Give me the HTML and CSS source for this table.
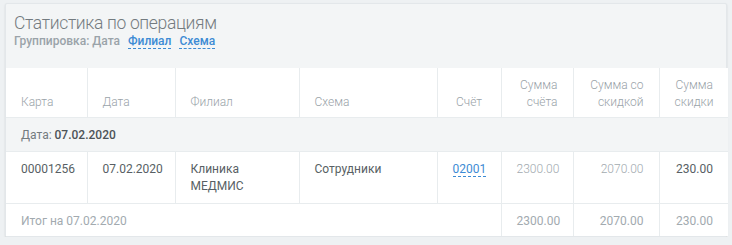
FILE: index.html
```html
<!DOCTYPE html>
<html lang="ru">
<head>
  <meta charset="UTF-8">
  <meta name="viewport" content="width=device-width, initial-scale=1.0">
  <title>Статистика по операциям</title>
  <link rel="stylesheet" href="styles.css">
</head>
<body>

  <div class="panel">
    <div class="panel-head">
      <h2 class="panel-title">Статистика по операциям</h2>
      <div class="grouping">
        Группировка: Дата
        <a href="#" class="dash-link">Филиал</a>
        <a href="#" class="dash-link">Схема</a>
      </div>
    </div>

    <table class="stats">
      <colgroup>
        <col class="c-card">
        <col class="c-date">
        <col class="c-branch">
        <col class="c-scheme">
        <col class="c-bill">
        <col class="c-sum">
        <col class="c-disc">
        <col class="c-diff">
      </colgroup>
      <thead>
        <tr>
          <th>Карта</th>
          <th>Дата</th>
          <th>Филиал</th>
          <th>Схема</th>
          <th class="center">Счёт</th>
          <th class="num">Сумма<br>счёта</th>
          <th class="num">Сумма со<br>скидкой</th>
          <th class="num">Сумма<br>скидки</th>
        </tr>
      </thead>
      <tbody>
        <tr class="group-row">
          <td colspan="8">Дата: <b>07.02.2020</b></td>
        </tr>
        <tr class="data-row">
          <td>00001256</td>
          <td>07.02.2020</td>
          <td>Клиника<br>МЕДМИС</td>
          <td>Сотрудники</td>
          <td class="center"><a href="#" class="dash-link">02001</a></td>
          <td class="num muted">2300.00</td>
          <td class="num muted">2070.00</td>
          <td class="num">230.00</td>
        </tr>
        <tr class="total-row">
          <td colspan="5">Итог на 07.02.2020</td>
          <td class="num">2300.00</td>
          <td class="num">2070.00</td>
          <td class="num">230.00</td>
        </tr>
      </tbody>
    </table>
  </div>

</body>
</html>
```

FILE: styles.css
```css
body {
  margin: 0;
  padding: 3px 5px 0 5px;
  background-color: #eef1f3;
  font-family: Roboto, "Noto Sans", sans-serif;
  color: #585f64;
}

.panel {
  background-color: #f3f5f6;
  border: 1px solid #e3e7ea;
  border-radius: 2px;
  box-shadow: 0 1px 2px rgba(0, 0, 0, 0.12);
}

.panel-head {
  padding: 9px 8px 19px 8px;
}

.panel-title {
  margin: 0;
  font-size: 17.5px;
  font-weight: 300;
  letter-spacing: -0.35px;
  line-height: 20px;
  color: #737b80;
}

.grouping {
  font-size: 12px;
  font-weight: 500;
  line-height: 16px;
  color: #9aa3a9;
}

.dash-link {
  color: #3d8bd4;
  text-decoration: none;
  border-bottom: 1px dashed #3d8bd4;
}

.grouping .dash-link {
  margin-left: 5px;
}

/* таблица */
.stats {
  width: 100%;
  border-collapse: collapse;
  table-layout: fixed;
  background-color: #fff;
  font-size: 12px;
  line-height: 17px;
}

.c-card { width: 81px; }
.c-date { width: 88px; }
.c-branch { width: 124px; }
.c-scheme { width: 138px; }
.c-bill { width: 64px; }
.c-sum { width: 72px; }
.c-disc { width: 86px; }
.c-diff { width: 69px; }

.stats th,
.stats td {
  padding: 0 15px;
  text-align: left;
  border-left: 1px solid #e8ecee;
  border-top: 1px solid #e8ecee;
}

.stats th:first-child,
.stats td:first-child {
  border-left: none;
}

.stats th {
  height: 43px;
  padding-top: 0;
  padding-bottom: 6px;
  vertical-align: bottom;
  font-weight: 300;
  color: #9aa3a9;
  border-top: none;
}

.stats .num {
  text-align: right;
}

.stats .center {
  text-align: center;
}

.group-row td {
  background-color: #f3f5f6;
  height: 31px;
  padding-top: 2px;
  padding-bottom: 0;
  color: #737b80;
}

.group-row b {
  font-weight: 500;
  color: #4d5358;
}

.data-row td {
  vertical-align: top;
  padding-top: 9px;
  padding-bottom: 8px;
}

.data-row .muted {
  color: #a2aaaf;
  font-weight: 300;
}

.total-row td {
  height: 29px;
  padding-top: 3px;
  padding-bottom: 0;
  color: #a2aaaf;
}
```
